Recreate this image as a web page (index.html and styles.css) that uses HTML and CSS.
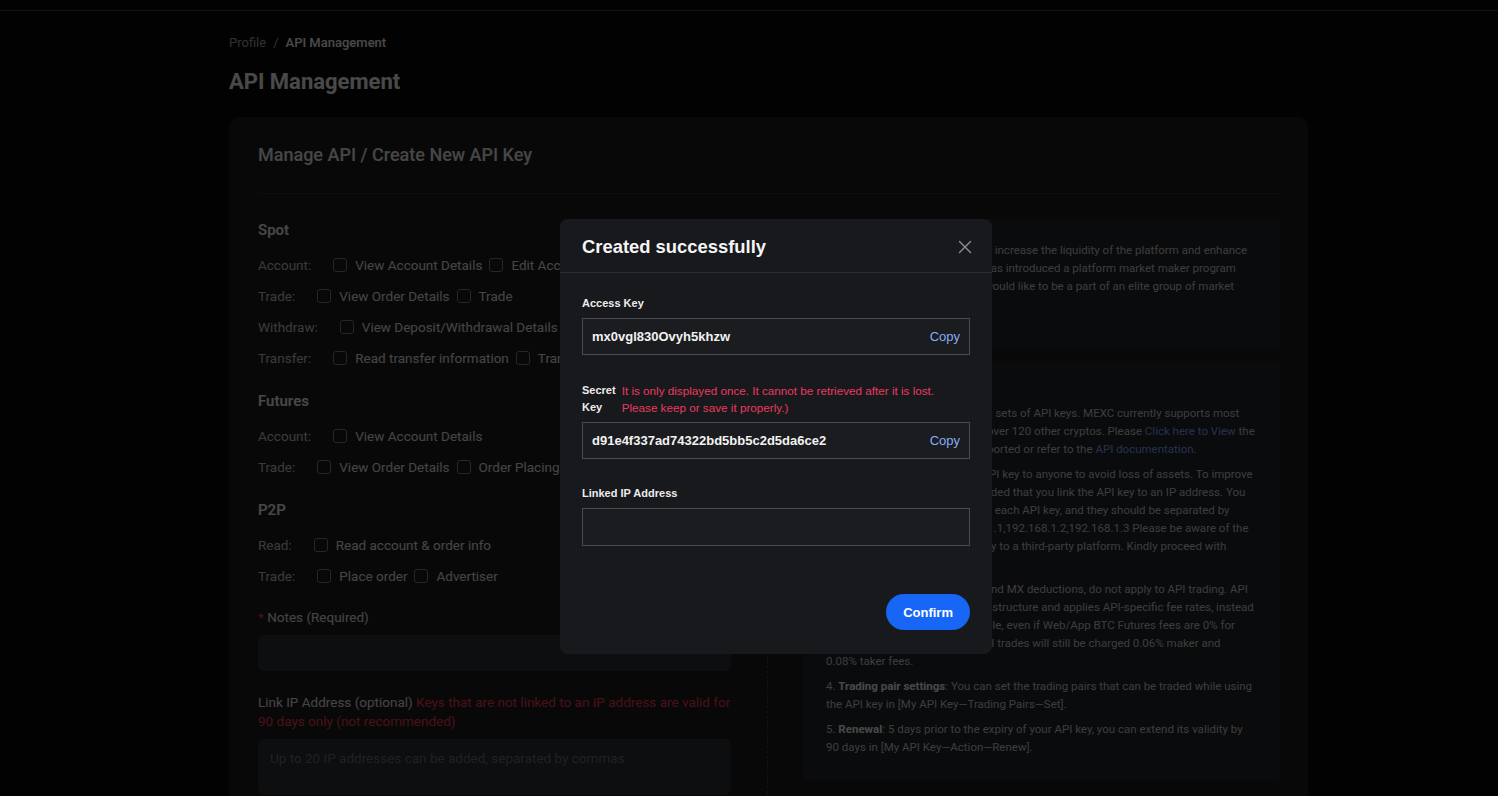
FILE: index.html
```html
<!DOCTYPE html>
<html lang="en">
<head>
<meta charset="utf-8">
<title>API Management</title>
<link rel="stylesheet" href="styles.css">
</head>
<body>
<header class="topbar"></header>
<main class="page">
  <div class="breadcrumb"><span>Profile</span><span class="sep">/</span><span class="crumb-current">API Management</span></div>
  <h1>API Management</h1>
  <section class="card">
    <div class="card-title">Manage API / Create New API Key</div>
    <div class="card-body">
      <div class="form-col">
        <div class="group-title">Spot</div>
        <div class="perm-row"><span class="perm-label">Account:</span><label class="opt"><span class="box"></span>View Account Details</label><label class="opt"><span class="box"></span>Edit Account Details</label></div>
        <div class="perm-row"><span class="perm-label">Trade:</span><label class="opt"><span class="box"></span>View Order Details</label><label class="opt"><span class="box"></span>Trade</label></div>
        <div class="perm-row"><span class="perm-label">Withdraw:</span><label class="opt"><span class="box"></span>View Deposit/Withdrawal Details</label><label class="opt"><span class="box"></span>Withdraw</label></div>
        <div class="perm-row"><span class="perm-label">Transfer:</span><label class="opt"><span class="box"></span>Read transfer information</label><label class="opt"><span class="box"></span>Transfer</label></div>

        <div class="group-title spaced">Futures</div>
        <div class="perm-row"><span class="perm-label">Account:</span><label class="opt"><span class="box"></span>View Account Details</label></div>
        <div class="perm-row"><span class="perm-label">Trade:</span><label class="opt"><span class="box"></span>View Order Details</label><label class="opt"><span class="box"></span>Order Placing</label></div>

        <div class="group-title spaced">P2P</div>
        <div class="perm-row"><span class="perm-label">Read:</span><label class="opt"><span class="box"></span>Read account &amp; order info</label></div>
        <div class="perm-row"><span class="perm-label">Trade:</span><label class="opt"><span class="box"></span>Place order</label><label class="opt"><span class="box"></span>Advertiser</label></div>

        <div class="notes-label"><span class="req">*</span> Notes (Required)</div>
        <div class="text-input"></div>

        <div class="ip-label">Link IP Address (optional) <span class="ip-warn">Keys that are not linked to an IP address are valid for 90 days only (not recommended)</span></div>
        <div class="text-area">Up to 20 IP addresses can be added, separated by commas</div>
      </div>

      <div class="divider"></div>

      <div class="info-col">
        <div class="info-box first">
          <p>Market Makers Plans: In order to increase the liquidity of the platform and enhance <span class="nowrap">the trading</span> experiences, MEXC has introduced a platform market maker program designed for VIP clients. If you would like to be a part of an elite group of market makers, please contact us.</p>
        </div>
        <div class="info-box second">
          <div class="info-title">API Notes</div>
          <p>1. Each user may create up to 30 sets of API keys. MEXC currently supports most mainstream coins like BTC and over 120 other cryptos. Please <a class="lnk">Click here to View</a> the complete list of the cryptos supported or refer to the <a class="lnk">API documentation</a>.</p>
          <p>2. Please do not disclose your API key to anyone to avoid loss of assets. To improve security, it is strongly recommended that you link the API key to an IP address. You can link up to 20 IP addresses to each API key, and they should be separated by commas, for example: 192.168.1.1,192.168.1.2,192.168.1.3 Please be aware of the risks when providing your API key to a third-party platform. Kindly proceed with caution.</p>
          <p>3. Fee discounts, including VIP and MX deductions, do not apply to API trading. API trading uses an independent fee structure and applies API-specific fee rates, instead of the standard rates. For example, even if Web/App BTC Futures fees are 0% for both makers and takers, your API trades will still be charged 0.06% maker and <span class="nowrap">0.08% taker fees.</span></p>
          <p>4. <b>Trading pair settings</b>: You can set the trading pairs that can be traded while using the API key in [My API Key—Trading Pairs—Set].</p>
          <p>5. <b>Renewal</b>: 5 days prior to the expiry of your API key, you can extend its validity by <span class="nowrap">90 days</span> in [My API Key—Action—Renew].</p>
        </div>
      </div>
    </div>
  </section>
</main>

<div class="mask"></div>

<div class="modal">
  <div class="modal-head">
    <span class="modal-title">Created successfully</span>
    <svg class="close" width="14" height="14" viewBox="0 0 14 14"><path d="M1.5 1.5 L12.5 12.5 M12.5 1.5 L1.5 12.5" stroke="#8d8f94" stroke-width="1.4" fill="none" stroke-linecap="round"/></svg>
  </div>
  <div class="modal-body">
    <div class="field">
      <div class="field-label">Access Key</div>
      <div class="key-box"><span class="key-text">mx0vgl830Ovyh5khzw</span><span class="copy">Copy</span></div>
    </div>
    <div class="field">
      <div class="field-head">
        <span class="field-label narrow">Secret Key</span>
        <span class="warn"><span class="warn-line">It is only displayed once. It cannot be retrieved after it is lost.</span><span class="warn-line">Please keep or save it properly.)</span></span>
      </div>
      <div class="key-box"><span class="key-text">d91e4f337ad74322bd5bb5c2d5da6ce2</span><span class="copy">Copy</span></div>
    </div>
    <div class="field field-ip">
      <div class="field-label">Linked IP Address</div>
      <div class="key-box empty"></div>
    </div>
    <div class="modal-foot">
      <button class="confirm">Confirm</button>
    </div>
  </div>
</div>
</body>
</html>
```

FILE: styles.css
```css
* { box-sizing: border-box; }

body {
  margin: 0;
  height: 796px;
  overflow: hidden;
  background: #090909;
  font-family: Roboto, "Liberation Sans", sans-serif;
  color: #e8e8e8;
}

.topbar {
  height: 11px;
  border-bottom: 1px solid #3e3e3e;
}

.page {
  margin-left: 229px;
  width: 1079px;
}

.breadcrumb {
  margin-top: 24px;
  font-size: 13px;
  line-height: 16px;
  color: #a3a5a9;
}
.breadcrumb .sep { margin: 0 7px; }
.crumb-current { color: #f6f6f6; font-weight: 500; }

h1 {
  margin: 16px 0 0;
  font-size: 22px;
  line-height: 30px;
  font-weight: 700;
  color: #f4f4f4;
}

.card {
  margin-top: 20px;
  background: #1b1d21;
  border-radius: 10px;
  padding: 26px 28px 0 29px;
  height: 700px;
}

.card-title {
  font-size: 18px;
  line-height: 24px;
  font-weight: 500;
  color: #ececec;
  padding-bottom: 26px;
  border-bottom: 1px solid #2e3035;
}

.card-body {
  display: grid;
  grid-template-columns: 473px 1px 477px;
  justify-content: space-between;
  padding-top: 25px;
}

.form-col { padding-top: 1px; }

.group-title {
  font-size: 15px;
  line-height: 20px;
  font-weight: 600;
  color: #ededed;
  margin-bottom: 9px;
}
.group-title.spaced { margin-top: 18px; }

.perm-row {
  display: flex;
  align-items: center;
  height: 31px;
  font-size: 13.5px;
  white-space: nowrap;
}
.perm-label {
  color: #c2c4c8;
  margin-right: 22px;
}
.opt {
  display: flex;
  align-items: center;
  gap: 8px;
  margin-right: 7px;
  color: #e6e6e6;
}
.box {
  width: 14px;
  height: 14px;
  border: 1px solid #7d8086;
  border-radius: 3px;
}

.notes-label {
  margin-top: 17px;
  font-size: 13.5px;
  line-height: 18px;
  color: #e6e6e6;
}
.req { color: #f0354f; }

.text-input {
  margin-top: 9px;
  height: 36px;
  background: #2c2f34;
  border-radius: 6px;
}

.ip-label {
  margin-top: 22px;
  font-size: 13.5px;
  line-height: 19px;
  color: #e6e6e6;
}
.ip-warn { color: #f23a52; }

.text-area {
  margin-top: 8px;
  height: 56px;
  background: #2c2f34;
  border-radius: 6px;
  padding: 10px 12px;
  font-size: 13.5px;
  line-height: 18px;
  color: #6e7176;
}

.divider {
  border-left: 1px dashed #3f4247;
  height: 640px;
}

.info-box {
  background: #23262b;
  border-radius: 4px;
  font-size: 11.5px;
  line-height: 18px;
  color: #c9cbcf;
}
.info-box p { margin: 0 0 7px; }
.info-box p:last-child { margin-bottom: 0; }
.info-box b { color: #f2f2f2; font-weight: 700; }
.info-box.first { padding: 22px 20px 36px 23px; }
.info-box.second { margin-top: 12px; padding: 22px 20px 24px 23px; }
.info-title {
  font-size: 14px;
  line-height: 18px;
  font-weight: 600;
  color: #f0f0f0;
  margin-bottom: 3px;
}
.lnk { color: #7ea6f5; }
.nowrap { white-space: nowrap; }

.mask {
  position: fixed;
  inset: 0;
  background: rgba(0, 0, 0, 0.7);
}

.modal {
  position: fixed;
  left: 560px;
  top: 219px;
  width: 432px;
  height: 435px;
  background: #18191d;
  border-radius: 8px;
  font-family: "Liberation Sans", Arial, sans-serif;
}

.modal-head {
  height: 54px;
  display: flex;
  align-items: center;
  justify-content: space-between;
  padding: 2px 20px 0 22px;
  border-bottom: 1px solid #2d2e33;
}
.modal-title {
  font-size: 18.4px;
  font-weight: 700;
  color: #f5f5f5;
}

.modal-body { padding: 23px 22px 0; }

.field { margin-bottom: 27px; }
.field-ip { margin-top: 1px; }
.field-label {
  font-size: 11px;
  line-height: 14px;
  font-weight: 700;
  color: #ececec;
  margin-bottom: 8px;
}
.field-head {
  display: flex;
  gap: 6px;
  margin-bottom: 6px;
}
.field-head .field-label {
  width: min-content;
  margin: 0;
  line-height: 17px;
}
.warn {
  font-size: 11.7px;
  line-height: 17px;
  color: #ea3a5d;
}
.warn-line { display: block; }

.key-box {
  height: 37px;
  border: 1px solid #4b4c50;
  background: #1b1c1f;
  display: flex;
  align-items: center;
  justify-content: space-between;
  padding: 0 9px;
  font-size: 13px;
}
.key-box.empty { height: 38px; }
.key-text { font-weight: 700; color: #f2f2f2; }
.copy { color: #86acf5; }

.modal-foot {
  display: flex;
  justify-content: flex-end;
  padding-top: 21px;
}
.confirm {
  height: 36px;
  padding: 0 17px;
  border: none;
  border-radius: 18px;
  background: #1766f6;
  color: #ffffff;
  font-family: "Liberation Sans", Arial, sans-serif;
  font-size: 13px;
  font-weight: 700;
}
```
